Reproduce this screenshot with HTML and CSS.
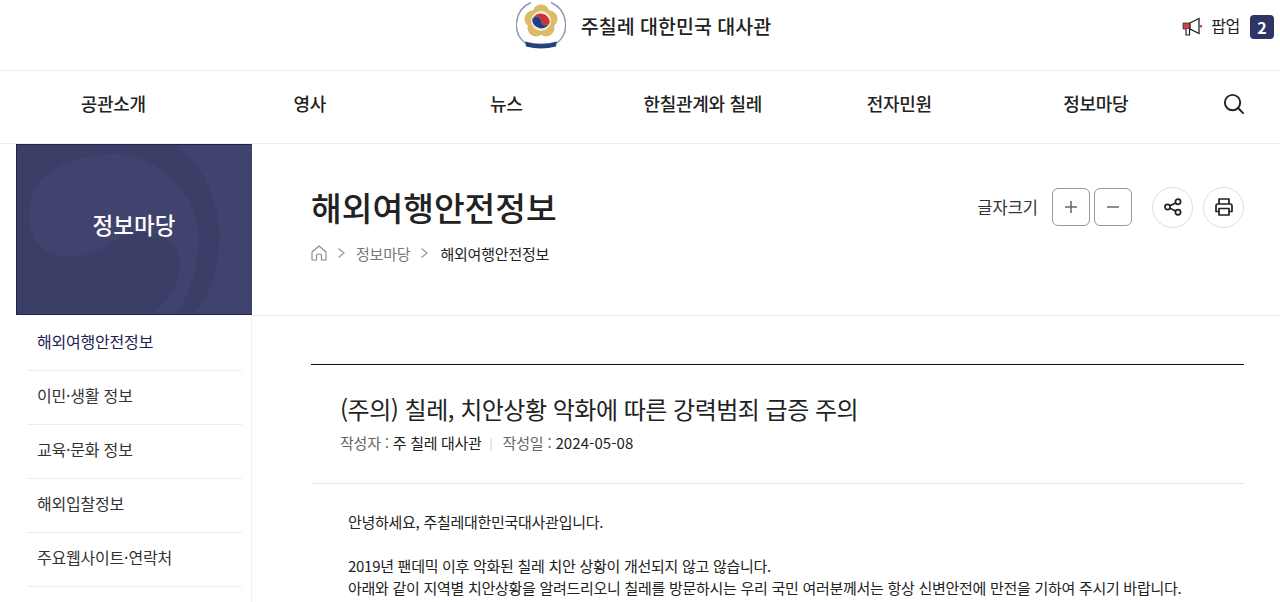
FILE: index.html
```html
<!DOCTYPE html>
<html lang="ko">
<head>
<meta charset="utf-8">
<title>해외여행안전정보</title>
<link rel="stylesheet" href="styles.css">
</head>
<body>
<header class="top">
  <div class="brand">
    <svg class="emblem" width="50" height="50" viewBox="0 0 50 50">
      <path d="M15 2.5 A24 24 0 0 0 9 43" fill="none" stroke="#8f9ab3" stroke-width="1.5"/>
      <path d="M35 2.5 A24 24 0 0 1 41 43" fill="none" stroke="#8f9ab3" stroke-width="1.5"/>
      <g fill="#dcbb66">
        <circle cx="25" cy="13" r="8.5"/>
        <circle cx="33" cy="19" r="8.5"/>
        <circle cx="30" cy="28" r="8.5"/>
        <circle cx="20" cy="28" r="8.5"/>
        <circle cx="17" cy="19" r="8.5"/>
      </g>
      <circle cx="25" cy="21" r="10" fill="#f4ecd6"/>
      <path d="M16.2 20 A9 9 0 0 1 33.8 22 A4.5 4.5 0 0 1 25 21 A4.5 4.5 0 0 0 16.2 20 Z" fill="#c9352f"/>
      <path d="M16.2 20 A9 9 0 0 0 33.8 22 A4.5 4.5 0 0 1 25 21 A4.5 4.5 0 0 0 16.2 20 Z" fill="#1f4088"/>
      <path d="M9 41.5 Q25 46 41 41.5 L40 46.5 Q25 50.5 10 46.5 Z" fill="#24407f"/>
    </svg>
    <span class="brand-name">주칠레 대한민국 대사관</span>
  </div>
  <div class="popup">
    <svg width="20" height="20" viewBox="0 0 20 20">
      <path d="M1 6 H8 V12 H1 Z" fill="#d2404c" stroke="#333" stroke-width="0.8"/>
      <path d="M8 6 L17 1.5 V16.5 L8 12 Z" fill="#fff" stroke="#222" stroke-width="1.3"/>
      <path d="M4 12 V18 H7.5 V12" fill="#fff" stroke="#222" stroke-width="1.2"/>
      <rect x="18" y="8" width="2" height="2.5" fill="#d2404c"/>
    </svg>
    <span class="popup-label">팝업</span>
    <span class="popup-count">2</span>
  </div>
</header>
<nav class="gnb">
  <a class="gnb-item">공관소개</a>
  <a class="gnb-item">영사</a>
  <a class="gnb-item">뉴스</a>
  <a class="gnb-item">한칠관계와 칠레</a>
  <a class="gnb-item">전자민원</a>
  <a class="gnb-item">정보마당</a>
  <svg class="search" width="23" height="23" viewBox="0 0 24 24" fill="none" stroke="#222" stroke-width="2" stroke-linecap="round">
    <circle cx="11" cy="11" r="8"/><path d="M17 17 L22 22"/>
  </svg>
</nav>
<div class="layout">
  <aside class="side">
    <div class="side-title">
      <svg class="swirl" viewBox="0 0 236 171" preserveAspectRatio="none">
        <path d="M0 0 H163 C190 25 204 60 204 92 C204 125 195 150 178 171 H0 Z" fill="#3b3f67"/>
        <path d="M12 70 C12 30 50 9 100 9 C150 12 183 55 183 93 C183 125 175 150 160 171 L138 171 C158 150 168 130 163 113 C155 85 125 85 105 93 C85 108 70 113 50 113 C28 113 12 95 12 70 Z" fill="#3f436d"/>
      </svg>
      <span class="side-title-text">정보마당</span>
    </div>
    <ul class="side-menu">
      <li class="active">해외여행안전정보</li>
      <li>이민·생활 정보</li>
      <li>교육·문화 정보</li>
      <li>해외입찰정보</li>
      <li>주요웹사이트·연락처</li>
    </ul>
  </aside>
  <main class="main">
    <div class="page-head">
      <div class="head-row">
        <h1 class="page-title">해외여행안전정보</h1>
        <div class="tools">
          <span class="tools-label">글자크기</span>
          <span class="sq-btn"><svg width="14" height="14" viewBox="0 0 14 14" stroke="#666" stroke-width="1.5"><path d="M7 1 V13 M1 7 H13"/></svg></span>
          <span class="sq-btn"><svg width="14" height="14" viewBox="0 0 14 14" stroke="#666" stroke-width="1.5"><path d="M1 7 H13"/></svg></span>
          <span class="round-btn first"><svg width="20" height="20" viewBox="0 0 20 20" fill="none" stroke="#222" stroke-width="1.7"><circle cx="4.5" cy="10" r="2.6"/><circle cx="15" cy="4.8" r="2.6"/><circle cx="15" cy="15.2" r="2.6"/><path d="M7 8.8 L12.6 6 M7 11.2 L12.6 14"/></svg></span>
          <span class="round-btn"><svg width="20" height="20" viewBox="0 0 20 20" fill="none" stroke="#222" stroke-width="1.7" stroke-linejoin="round"><path d="M5 7 V2 H15 V7"/><path d="M5 14.5 H2 V9 Q2 7 4 7 H16 Q18 7 18 9 V14.5 H15"/><rect x="5" y="11.5" width="10" height="6.5"/></svg></span>
        </div>
      </div>
      <div class="crumbs">
        <svg width="16" height="16" viewBox="0 0 16 16" fill="none" stroke="#888" stroke-width="1.1" stroke-linejoin="round"><path d="M1 7 L8 1 L15 7 V15 H10.5 V10.5 Q10.5 9 8 9 Q5.5 9 5.5 10.5 V15 H1 Z"/></svg>
        <svg class="chev" width="9" height="12" viewBox="0 0 9 12" fill="none" stroke="#999" stroke-width="1.2"><path d="M1.5 1.5 L7 6 L1.5 10.5"/></svg>
        <span class="crumb-mid">정보마당</span>
        <svg class="chev" width="9" height="12" viewBox="0 0 9 12" fill="none" stroke="#999" stroke-width="1.2"><path d="M1.5 1.5 L7 6 L1.5 10.5"/></svg>
        <span class="crumb-cur">해외여행안전정보</span>
      </div>
    </div>
    <article class="article">
      <div class="article-head">
        <h2 class="article-title">(주의) 칠레, 치안상황 악화에 따른 강력범죄 급증 주의</h2>
        <div class="meta">
          <span class="meta-key">작성자 :</span>
          <span class="meta-name">주 칠레 대사관</span>
          <span class="meta-sep">|</span>
          <span class="meta-key">작성일 :</span>
          <span class="meta-date">2024-05-08</span>
        </div>
      </div>
      <div class="article-body">
        <p>안녕하세요, 주칠레대한민국대사관입니다.</p>
        <p class="gap">2019년 팬데믹 이후 악화된 칠레 치안 상황이 개선되지 않고 않습니다.</p>
        <p>아래와 같이 지역별 치안상황을 알려드리오니 칠레를 방문하시는 우리 국민 여러분께서는 항상 신변안전에 만전을 기하여 주시기 바랍니다.</p>
      </div>
    </article>
  </main>
</div>
</body>
</html>
```

FILE: styles.css
```css
* { box-sizing: border-box; }
html, body { margin: 0; padding: 0; height: 602px; overflow: hidden; }
body { background: #fff; color: #222; font-family: "Noto Sans CJK KR", "Noto Sans", sans-serif; }
.top { height: 71px; border-bottom: 1px solid #ececec; display: flex; align-items: flex-start; justify-content: center; position: relative; }
.brand { display: flex; align-items: center; gap: 15px; margin-left: 7px; height: 50px; }
.emblem { display: block; }
.brand-name { font-size: 19.5px; font-weight: 500; color: #222; }
.popup { position: absolute; right: 6px; top: 15px; display: flex; align-items: center; height: 24px; }
.popup-label { font-size: 16px; letter-spacing: -0.3px; margin: -4px 0 0 9px; color: #222; }
.popup-count { margin-left: 10px; width: 24px; height: 24px; border-radius: 4px; background: #2e3566; color: #fff; font-size: 16px; font-weight: 700; display: flex; align-items: center; justify-content: center; }
.gnb { height: 73px; border-bottom: 1px solid #ececec; display: flex; align-items: center; position: relative; padding: 0 0 8px 15px; }
.gnb-item { width: 196.5px; text-align: center; font-size: 18px; letter-spacing: -0.3px; font-weight: 500; color: #222; }
.search { position: absolute; left: 1222px; top: 21px; }
.layout { display: flex; padding-left: 16px; }
.side { width: 236px; flex: none; }
.side-title { height: 171px; background: #3f436d; position: relative; display: flex; align-items: center; justify-content: center; border: 1px solid #1f2350; border-right-color: #3f436d; }
.swirl { position: absolute; inset: 0; width: 100%; height: 100%; }
.side-title-text { position: relative; color: #fff; font-size: 22.5px; font-weight: 500; margin-top: -12px; }
.side-menu { list-style: none; margin: 0; padding: 0 9px 0 11px; border-right: 1px solid #f0f0f0; height: 287px; }
.side-menu li { height: 54px; line-height: 48px; font-size: 16px; letter-spacing: -0.2px; color: #333; border-bottom: 1px solid #ececec; padding-left: 10px; }
.side-menu li.active { height: 56px; line-height: 52px; color: #1c2354; }
.main { flex: 1; padding: 0 36px 0 59px; min-width: 0; }
.page-head { height: 172px; position: relative; padding-top: 41px; }
.page-head::after { content: ""; position: absolute; left: -59px; right: -36px; bottom: 0; border-bottom: 1px solid #ececec; }
.head-row { display: flex; justify-content: space-between; align-items: center; height: 44px; }
.page-title { margin: 0; font-size: 33.4px; font-weight: 500; color: #222; line-height: 44px; }
.tools { display: flex; align-items: center; }
.tools-label { font-size: 16.5px; color: #333; margin-right: 14px; }
.sq-btn { width: 38px; height: 38px; border: 1px solid #999; border-radius: 6px; display: flex; align-items: center; justify-content: center; margin-right: 4px; }
.round-btn { width: 41px; height: 41px; border: 1px solid #ddd; border-radius: 50%; display: flex; align-items: center; justify-content: center; margin-left: 10px; }
.round-btn.first { margin-left: 16px; }
.crumbs { display: flex; align-items: center; margin-top: 12px; height: 24px; font-size: 15px; letter-spacing: -0.2px; }
.chev { margin: 0 10px; }
.crumb-mid { color: #777; }
.crumb-cur { color: #222; margin-left: 1px; }
.article { padding-top: 48px; }
.article-head { border-top: 1px solid #111; height: 120px; border-bottom: 1px solid #e5e5e5; padding: 26px 0 0 29px; }
.article-title { margin: 0; font-size: 24px; letter-spacing: -0.5px; font-weight: 400; line-height: 36px; color: #222; }
.meta { display: flex; align-items: center; font-size: 15px; line-height: 24px; margin-top: 4px; gap: 4px; }
.meta-key { color: #666; letter-spacing: -0.2px; }
.meta-name { color: #222; letter-spacing: -0.3px; }
.meta-date { color: #222; letter-spacing: 0.1px; }
.meta-sep { color: #bbb; font-size: 11px; margin: 0 6px 0 4px; }
.article-body { padding: 27px 0 0 37px; font-size: 15px; letter-spacing: -0.28px; line-height: 22px; color: #222; }
.article-body p { margin: 0; }
.article-body p.gap { margin-top: 22px; }
```
